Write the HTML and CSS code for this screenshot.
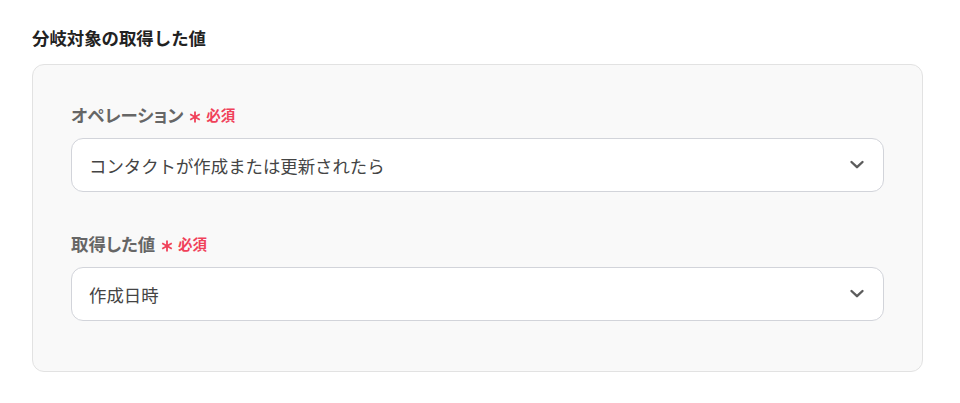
FILE: index.html
```html
<!DOCTYPE html>
<html lang="ja">
<head>
    <meta charset="UTF-8">
    <meta name="viewport" content="width=device-width, initial-scale=1.0">
    <title>分岐対象の取得した値</title>
    <link rel="stylesheet" href="styles.css">
</head>
<body>
    <div class="section">
        <h2 class="section-title">分岐対象の取得した値</h2>
        <div class="panel">
            <div class="field">
                <label class="field-label">オペレーション
                    <svg class="req-mark" width="12" height="12" viewBox="0 0 12 12"><path d="M6 0.5 V11.5 M1.2 3.2 L10.8 8.8 M1.2 8.8 L10.8 3.2" stroke="#f0415a" stroke-width="1.8"/></svg>
                    <span class="req">必須</span>
                </label>
                <div class="select">
                    <span>コンタクトが作成または更新されたら</span>
                    <svg class="chevron" width="16" height="16" viewBox="0 0 16 16"><path d="M2.5 5 L8 10.2 L13.5 5" fill="none" stroke="#5c5c5c" stroke-width="2.4" stroke-linecap="round" stroke-linejoin="round"/></svg>
                </div>
            </div>
            <div class="field">
                <label class="field-label">取得した値
                    <svg class="req-mark" width="12" height="12" viewBox="0 0 12 12"><path d="M6 0.5 V11.5 M1.2 3.2 L10.8 8.8 M1.2 8.8 L10.8 3.2" stroke="#f0415a" stroke-width="1.8"/></svg>
                    <span class="req">必須</span>
                </label>
                <div class="select">
                    <span>作成日時</span>
                    <svg class="chevron" width="16" height="16" viewBox="0 0 16 16"><path d="M2.5 5 L8 10.2 L13.5 5" fill="none" stroke="#5c5c5c" stroke-width="2.4" stroke-linecap="round" stroke-linejoin="round"/></svg>
                </div>
            </div>
        </div>
    </div>
</body>
</html>
```

FILE: styles.css
```css
body {
    margin: 0;
    background: #ffffff;
    font-family: "Noto Sans CJK JP", "Noto Sans", sans-serif;
    color: #333;
}
.section {
    padding: 25px 37px 0 32px;
}
.section-title {
    margin: 0 0 13px;
    font-size: 17.4px;
    font-weight: bold;
    line-height: 26px;
    color: #222;
}
.panel {
    background: #f9f9f9;
    border: 1px solid #e2e2e2;
    border-radius: 12px;
    padding: 38px 38px 50px;
    display: flex;
    flex-direction: column;
    gap: 40px;
}
.field-label {
    display: flex;
    align-items: center;
    font-size: 17.4px;
    font-weight: bold;
    font-feature-settings: "palt";
    color: #666;
    line-height: 24px;
    margin-bottom: 11px;
}
.req-mark {
    margin: 4px 5px 0 6px;
}
.req {
    color: #f0415a;
    font-size: 14.5px;
}
.select {
    box-sizing: border-box;
    display: flex;
    align-items: center;
    justify-content: space-between;
    height: 54px;
    padding: 0 17px;
    background: #fff;
    border: 1px solid #d2d4da;
    border-radius: 12px;
    font-size: 17.4px;
    color: #444;
}
.chevron {
    margin-right: 1px;
}
```
